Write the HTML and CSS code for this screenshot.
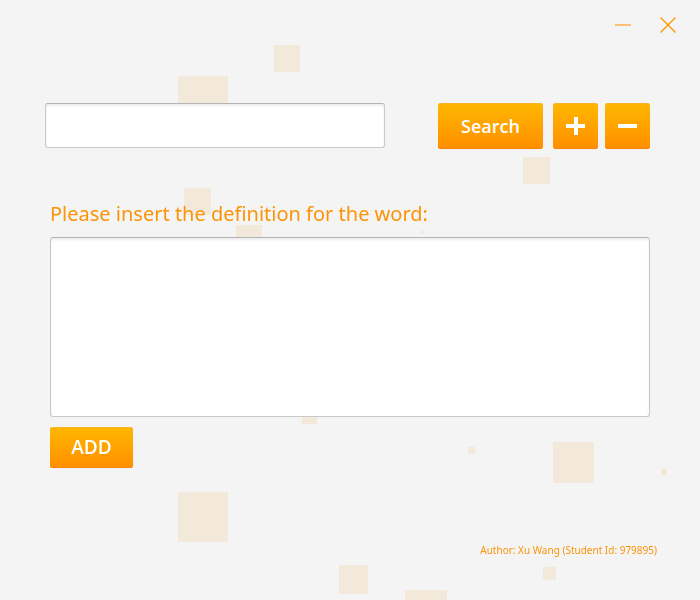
FILE: index.html
```html
<!DOCTYPE html>
<html lang="en">
<head>
<meta charset="utf-8">
<meta name="viewport" content="width=device-width, initial-scale=1">
<title>Dictionary</title>
<link rel="stylesheet" href="styles.css">
</head>
<body>
<svg class="backdrop" width="700" height="600" viewBox="0 0 700 600" shape-rendering="crispEdges" aria-hidden="true">
  <rect x="274" y="45" width="26" height="27"/>
  <rect x="178" y="76" width="50" height="50"/>
  <rect x="523" y="157" width="27" height="27"/>
  <rect x="184" y="188" width="27" height="27"/>
  <rect x="236" y="225" width="26" height="26"/>
  <rect x="421" y="231" width="3" height="3"/>
  <rect x="302" y="409" width="15" height="15"/>
  <rect x="468" y="447" width="7" height="7"/>
  <rect x="553" y="442" width="41" height="41"/>
  <rect x="661" y="469" width="6" height="6"/>
  <rect x="178" y="492" width="50" height="50"/>
  <rect x="339" y="565" width="29" height="29"/>
  <rect x="543" y="567" width="13" height="13"/>
  <rect x="405" y="590" width="42" height="42"/>
</svg>
<div class="window">
  <header class="titlebar">
    <button class="window-button" type="button" aria-label="Minimize">
      <svg width="16" height="16" viewBox="0 0 16 16"><path class="minimize" d="M0 8H16"/></svg>
    </button>
    <button class="window-button" type="button" aria-label="Close">
      <svg width="16" height="16" viewBox="0 0 16 16"><path class="close" d="M.5 .5L15.5 15.5M15.5 .5L.5 15.5"/></svg>
    </button>
  </header>
  <main>
    <form class="search">
      <input class="field search-field" type="text" aria-label="Word">
      <button class="button search-button" type="button">Search</button>
      <div class="tools">
        <button class="button tool" type="button" aria-label="Add word">
          <svg width="19" height="18" viewBox="0 0 19 18"><path d="M0 9H19M10 0V18"/></svg>
        </button>
        <button class="button tool" type="button" aria-label="Remove word">
          <svg width="19" height="18" viewBox="0 0 19 18"><path d="M0 9H19"/></svg>
        </button>
      </div>
    </form>
    <form class="definition">
      <label class="prompt" for="definition">Please insert the definition for the word:</label>
      <textarea class="field definition-field" id="definition"></textarea>
      <button class="button add-button" type="button">ADD</button>
    </form>
  </main>
  <footer class="author">Author: Xu Wang (Student Id: 979895)</footer>
</div>
</body>
</html>
```
FILE: styles.css
```css
* {
  box-sizing: border-box;
}

body {
  margin: 0;
  background: #f4f4f4;
  color: #fb9408;
  font-family: "Noto Sans", "Open Sans", sans-serif;
}

button,
input,
textarea {
  font: inherit;
}

.backdrop {
  position: fixed;
  top: 0;
  left: 0;
  z-index: -1;
  fill: #f3e9db;
}

.window {
  display: flex;
  flex-direction: column;
  min-height: 100vh;
  padding: 0 50px 40px;
}

.titlebar {
  display: flex;
  justify-content: flex-end;
  gap: 13px;
  height: 50px;
  margin-right: -34px;
}

.window-button {
  display: grid;
  place-items: center;
  width: 32px;
  height: 50px;
  padding: 0;
  border: 0;
  background: none;
}

.window-button path {
  fill: none;
  stroke: #ff9406;
}

.window-button .minimize {
  stroke: #fcc272;
  stroke-width: 2;
}

.window-button .close {
  stroke-width: 1.4;
}

.search {
  display: flex;
  align-items: flex-start;
  margin: 53px 0 0 -5px;
}

.field {
  display: block;
  border: 1px solid #c8c8c8;
  border-top-color: #b4b4b4;
  border-radius: 3px;
  background: #fff;
  box-shadow: inset 0 2px 3px #ededed;
  color: #333;
  resize: none;
  outline: none;
}

.search-field {
  flex: 1;
  min-width: 0;
  height: 45px;
  margin-right: 53px;
  padding: 0 12px;
  font-size: 18px;
}

.button {
  display: grid;
  place-items: center;
  padding: 0;
  border: 0;
  border-radius: 3px;
  background: linear-gradient(#ffb700, #ff8f00);
  box-shadow: inset 0 1px #f8b526, inset 0 -1px #f58507;
  color: #fff;
  font-family: "Open Sans", "Noto Sans", sans-serif;
  font-weight: 600;
}

.search-button {
  width: 105px;
  height: 46px;
  margin-right: 10px;
  font-size: 18px;
}

.tools {
  display: flex;
  gap: 7px;
}

.tool {
  width: 45px;
  height: 46px;
}

.tool path {
  fill: none;
  stroke: #fff;
  stroke-width: 4;
}

.definition {
  margin-top: 50px;
}

.prompt {
  display: block;
  margin-bottom: 8px;
  font-size: 20px;
  line-height: 30px;
}

.definition-field {
  width: 100%;
  height: 180px;
  padding: 8px 12px;
  font-size: 18px;
}

.add-button {
  width: 83px;
  height: 41px;
  margin-top: 10px;
  padding-bottom: 2px;
  font-size: 19px;
}

.author {
  margin: auto -7px 0 0;
  font-size: 10px;
  line-height: 20px;
  text-align: right;
}
```
